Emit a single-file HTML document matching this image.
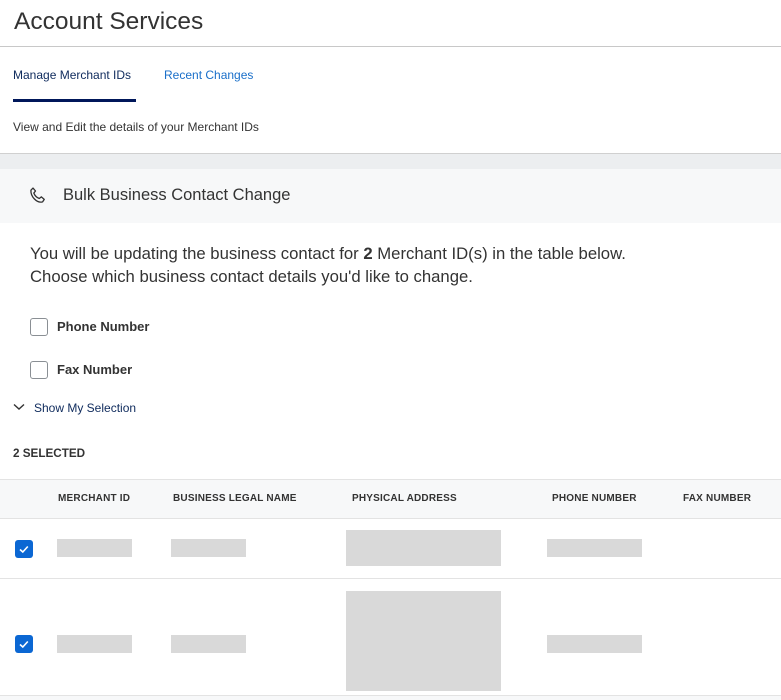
<!DOCTYPE html>
<html><head><meta charset="utf-8"><style>
*{margin:0;padding:0;box-sizing:border-box}
body{width:781px;height:700px;overflow:hidden;background:#fff;font-family:"Liberation Sans",Arial,sans-serif;color:#333;position:relative}
.a{position:absolute}
.g{position:absolute;background:#d9d9d9}
.cb{position:absolute;width:18px;height:18px;border:1px solid #8a8f94;border-radius:3px;background:#fff}
.bc{position:absolute;width:18px;height:18px;border-radius:3px;background:#0b67d3}
.th{position:absolute;top:493px;font-size:10px;font-weight:bold;color:#333;letter-spacing:.2px}
</style></head><body>
<div class="a" style="left:14px;top:8px;font-size:24.5px;color:#333">Account Services</div>
<div class="a" style="left:0;top:46px;width:781px;height:1px;background:#c8c8c8"></div>
<div class="a" style="left:13px;top:68px;font-size:12px;color:#0e2a5c">Manage Merchant IDs</div>
<div class="a" style="left:164px;top:68px;font-size:12px;color:#1a6fc9">Recent Changes</div>
<div class="a" style="left:13px;top:99px;width:123px;height:3px;background:#00175a"></div>
<div class="a" style="left:13px;top:120px;font-size:12px;color:#333">View and Edit the details of your Merchant IDs</div>
<div class="a" style="left:0;top:153px;width:781px;height:1px;background:#d0d0d0"></div>
<div class="a" style="left:0;top:154px;width:781px;height:15px;background:#eceef0"></div>
<div class="a" style="left:0;top:169px;width:781px;height:54px;background:#f7f8f9"></div>
<svg class="a" style="left:28px;top:186px" width="20" height="20" viewBox="0 0 24 24" fill="none" stroke="#333" stroke-width="1.6"><path d="M6 2.5l3 3.5-2 2.5c1.2 3 3.5 5.3 6.5 6.5l2.5-2 3.5 3-2 3C11 21 3 13 3.5 5z" stroke-linejoin="round"/></svg>
<div class="a" style="left:63px;top:186px;font-size:16.5px;color:#333">Bulk Business Contact Change</div>
<div class="a" style="left:30px;top:242px;font-size:16.7px;line-height:23px;color:#333">You will be updating the business contact for <b>2</b> Merchant ID(s) in the table below.<br>Choose which business contact details you'd like to change.</div>
<div class="cb" style="left:30px;top:318px"></div>
<div class="a" style="left:57px;top:319px;font-size:13px;font-weight:bold">Phone Number</div>
<div class="cb" style="left:30px;top:361px"></div>
<div class="a" style="left:57px;top:362px;font-size:13px;font-weight:bold">Fax Number</div>
<svg class="a" style="left:13px;top:403px" width="12" height="8" viewBox="0 0 12 8"><path d="M1 1.5l5 4.5 5-4.5" stroke="#333" stroke-width="1.4" fill="none"/></svg>
<div class="a" style="left:34px;top:401px;font-size:12px;color:#0e2a5c">Show My Selection</div>
<div class="a" style="left:13px;top:447px;font-size:11.7px;font-weight:bold">2 SELECTED</div>
<div class="a" style="left:0;top:479px;width:781px;height:1px;background:#e3e3e3"></div>
<div class="a" style="left:0;top:480px;width:781px;height:38px;background:#f7f8f9"></div>
<div class="a" style="left:0;top:518px;width:781px;height:1px;background:#e3e3e3"></div>
<div class="th" style="left:58px">MERCHANT ID</div>
<div class="th" style="left:173px">BUSINESS LEGAL NAME</div>
<div class="th" style="left:352px">PHYSICAL ADDRESS</div>
<div class="th" style="left:552px">PHONE NUMBER</div>
<div class="th" style="left:683px">FAX NUMBER</div>
<div class="bc" style="left:15px;top:540px"></div>
<svg class="a" style="left:15px;top:540px" width="18" height="18" viewBox="0 0 18 18"><path d="M5 9.5l2.8 2.5 5-5.5" stroke="#fff" stroke-width="1.6" fill="none"/></svg>
<div class="g" style="left:57px;top:539px;width:75px;height:18px"></div>
<div class="g" style="left:171px;top:539px;width:75px;height:18px"></div>
<div class="g" style="left:346px;top:530px;width:155px;height:36px"></div>
<div class="g" style="left:547px;top:539px;width:95px;height:18px"></div>
<div class="a" style="left:0;top:578px;width:781px;height:1px;background:#e3e3e3"></div>
<div class="bc" style="left:15px;top:635px"></div>
<svg class="a" style="left:15px;top:635px" width="18" height="18" viewBox="0 0 18 18"><path d="M5 9.5l2.8 2.5 5-5.5" stroke="#fff" stroke-width="1.6" fill="none"/></svg>
<div class="g" style="left:57px;top:635px;width:75px;height:18px"></div>
<div class="g" style="left:171px;top:635px;width:75px;height:18px"></div>
<div class="g" style="left:346px;top:591px;width:155px;height:100px"></div>
<div class="g" style="left:547px;top:635px;width:95px;height:18px"></div>
<div class="a" style="left:0;top:695px;width:781px;height:1px;background:#e3e3e3"></div>
<div class="a" style="left:0;top:696px;width:781px;height:4px;background:#f7f8f9"></div>
</body></html>
